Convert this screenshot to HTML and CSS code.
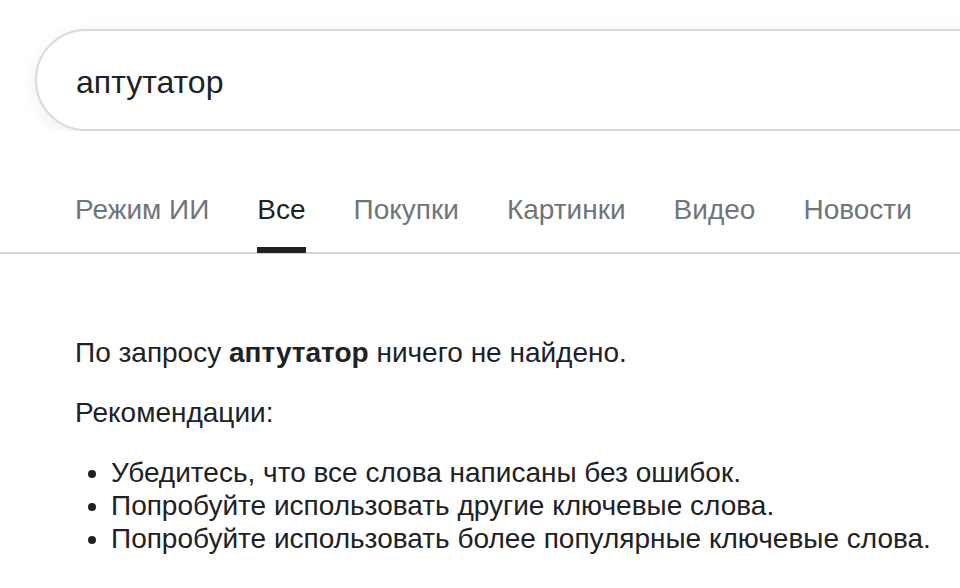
FILE: index.html
```html
<!DOCTYPE html>
<html lang="ru">
<head>
<meta charset="utf-8">
<title>аптутатор – Поиск</title>
<link rel="stylesheet" href="styles.css">
</head>
<body>
  <header class="top">
    <div class="searchbox">
      <span class="query">аптутатор</span>
    </div>
  </header>

  <nav class="tabs">
    <a class="tab">Режим ИИ</a>
    <a class="tab active">Все</a>
    <a class="tab">Покупки</a>
    <a class="tab">Картинки</a>
    <a class="tab">Видео</a>
    <a class="tab">Новости</a>
  </nav>

  <main class="results">
    <p class="notice">По запросу <b>аптутатор</b> ничего не найдено.</p>
    <p class="notice">Рекомендации:</p>
    <ul class="tips">
      <li>Убедитесь, что все слова написаны без ошибок.</li>
      <li>Попробуйте использовать другие ключевые слова.</li>
      <li>Попробуйте использовать более популярные ключевые слова.</li>
    </ul>
  </main>
</body>
</html>
```

FILE: styles.css
```css
html, body {
  margin: 0;
  padding: 0;
  background: #fff;
}

body {
  font-family: "Liberation Sans", Arial, sans-serif;
  color: #202124;
  overflow: hidden;
}

/* search field, runs past the right edge */
.top {
  padding: 29px 0 0 35px;
  overflow: hidden;
}

.searchbox {
  box-sizing: border-box;
  width: 1000px;
  height: 102px;
  border: 2px solid #d9d7df;
  border-radius: 51px;
  display: flex;
  align-items: center;
  padding: 4px 0 0 39px;
  box-shadow: 0 4px 16px rgba(32, 33, 36, 0.08);
  background: #fff;
}

.query {
  font-size: 32px;
  color: #202124;
}

/* category tabs */
.tabs {
  display: flex;
  gap: 48px;
  padding: 63px 0 0 75px;
  border-bottom: 2px solid #d3d3d3;
}

.tab {
  font-size: 28px;
  line-height: 32px;
  color: #70757a;
  padding-bottom: 21px;
  border-bottom: 6px solid transparent;
  margin-bottom: -1px;
}

.tab.active {
  color: #202124;
  border-bottom-color: #202124;
}

/* empty result message */
.results {
  padding: 84px 0 0 75px;
  font-size: 28px;
}

.notice {
  margin: 0 0 30px;
  line-height: 30px;
}

.tips {
  margin: -2px 0 0;
  padding-left: 36px;
  line-height: 33px;
}
```
